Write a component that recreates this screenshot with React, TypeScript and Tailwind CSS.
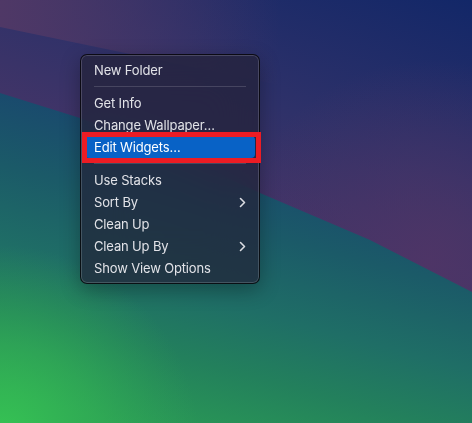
import React from "react";

const Chevron = () => (
  <svg width="7" height="11" viewBox="0 0 7 11" fill="none">
    <path d="M1.5 1.5 L5.5 5.5 L1.5 9.5" stroke="#dcdde3" strokeWidth="1.6" strokeLinecap="round" strokeLinejoin="round" />
  </svg>
);

const Item = ({ label, sub, active }: { label: string; sub?: boolean; active?: boolean }) => (
  <div
    className={
      active
        ? "h-[22px] flex items-center justify-between px-[9px] rounded-[4px] bg-[#0862c6] text-white"
        : "h-[22px] flex items-center justify-between px-[9px] rounded-[4px] text-[#e2e3e8]"
    }
  >
    <span>{label}</span>
    {sub && <Chevron />}
  </div>
);

const Sep = () => (
  <div className="h-[11px] flex items-center px-[9px]">
    <div className="h-px w-full bg-white/15" />
  </div>
);

const Wallpaper = () => (
  <svg className="absolute inset-0" width="472" height="423" viewBox="0 0 472 423">
    <defs>
      <linearGradient id="topg" gradientUnits="userSpaceOnUse" x1="330" y1="-60" x2="200" y2="260">
        <stop offset="0" stopColor="#122768" />
        <stop offset="0.5" stopColor="#2e3169" />
        <stop offset="0.85" stopColor="#453567" />
        <stop offset="1" stopColor="#4c3566" />
      </linearGradient>
      <linearGradient id="tl" gradientUnits="userSpaceOnUse" x1="0" y1="0" x2="280" y2="0">
        <stop offset="0" stopColor="#4f3866" stopOpacity="1" />
        <stop offset="1" stopColor="#4f3866" stopOpacity="0" />
      </linearGradient>
      <radialGradient id="rp" gradientUnits="userSpaceOnUse" cx="430" cy="260" r="200">
        <stop offset="0" stopColor="#4f3566" stopOpacity="0.9" />
        <stop offset="1" stopColor="#4f3566" stopOpacity="0" />
      </radialGradient>
      <linearGradient id="botg" gradientUnits="userSpaceOnUse" x1="200" y1="120" x2="120" y2="423">
        <stop offset="0" stopColor="#19456f" />
        <stop offset="0.3" stopColor="#1b5a68" />
        <stop offset="0.55" stopColor="#1f6e66" />
        <stop offset="0.75" stopColor="#23805c" />
        <stop offset="1" stopColor="#2a9a55" />
      </linearGradient>
      <radialGradient id="gr" gradientUnits="userSpaceOnUse" cx="0" cy="445" r="200">
        <stop offset="0" stopColor="#37c853" stopOpacity="1" />
        <stop offset="0.5" stopColor="#33b454" stopOpacity="0.6" />
        <stop offset="1" stopColor="#2ea456" stopOpacity="0" />
      </radialGradient>
    </defs>
    <rect x="0" y="0" width="472" height="423" fill="url(#topg)" />
    <polygon points="0,0 472,0 472,125 0,27" fill="url(#tl)" />
    <rect x="0" y="0" width="472" height="423" fill="url(#rp)" />
    <polygon
      points="0,93 80,118 170,152 260,193 370,240 472,292 472,423 0,423"
      fill="url(#botg)"
    />
    <rect x="0" y="0" width="472" height="423" fill="url(#gr)" />
  </svg>
);

export default function App() {
  return (
    <div
      className="relative w-[472px] h-[423px] overflow-hidden"
      style={{ fontFamily: "Inter, 'Liberation Sans', sans-serif" }}
    >
      <Wallpaper />
      <div className="absolute left-[80px] top-[54px] w-[180px] rounded-[7px] border border-black/70 bg-[rgba(34,33,54,0.7)] backdrop-blur-xl shadow-[inset_0_0_0_1px_rgba(255,255,255,0.16),0_6px_20px_rgba(0,0,0,0.3)] p-[4px] text-[13px] leading-none tracking-[-0.15px]">
        <Item label="New Folder" />
        <Sep />
        <Item label="Get Info" />
        <Item label="Change Wallpaper…" />
        <Item label="Edit Widgets…" active />
        <Sep />
        <Item label="Use Stacks" />
        <Item label="Sort By" sub />
        <Item label="Clean Up" />
        <Item label="Clean Up By" sub />
        <Item label="Show View Options" />
      </div>
      <div className="absolute left-[82px] top-[132px] w-[179px] h-[31px] border-[5px] border-[#ec1c24]" />
    </div>
  );
}
